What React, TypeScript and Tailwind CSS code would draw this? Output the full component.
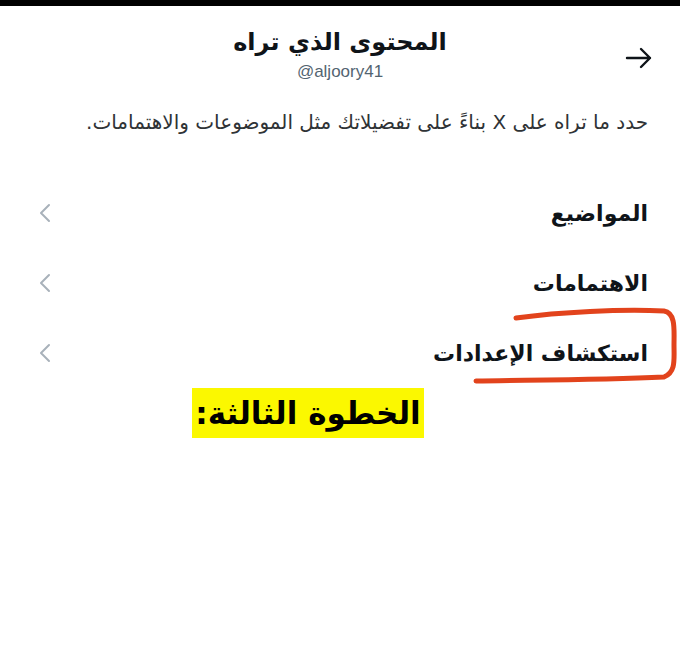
import React from "react";

const Chevron = () => (
  <svg width="14" height="20" viewBox="0 0 14 20" fill="none">
    <path d="M11 2 L3 10 L11 18" stroke="#a8b1ba" strokeWidth="2" strokeLinecap="round" strokeLinejoin="round" />
  </svg>
);

const Row = ({ label }: { label: string }) => (
  <div className="flex h-[70px] items-center justify-between pr-[32px] pl-[38px]" dir="ltr">
    <Chevron />
    <span className="text-[22px] font-bold text-[#0f1419]" dir="rtl">{label}</span>
  </div>
);

export default function App() {
  return (
    <div
      className="relative h-[659px] w-[680px] overflow-hidden bg-white"
      style={{ fontFamily: '"DejaVu Sans", "Noto Sans", sans-serif' }}
    >
      <div className="h-[6px] w-full bg-black" />
      <div className="relative flex flex-col items-center pt-[20px]">
        <div className="text-[24px] font-bold leading-[32px] text-[#0f1419]" dir="rtl">المحتوى الذي تراه</div>
        <div className="mt-[4px] text-[17px] leading-[20px] text-[#536471]" style={{ fontFamily: '"Liberation Sans", Arial, sans-serif' }}>@aljoory41</div>
        <div className="absolute right-[26px] top-[40px]">
          <svg width="30" height="24" viewBox="0 0 30 24" fill="none">
            <path d="M3 12 H26 M17 3 L26 12 L17 21" stroke="#0f1419" strokeWidth="2.4" strokeLinecap="round" strokeLinejoin="round" />
          </svg>
        </div>
      </div>
      <div className="mt-[26px] whitespace-nowrap pr-[32px] text-right text-[20px] leading-[28px] text-[#2f3336]" dir="rtl">
        حدد ما تراه على X بناءً على تفضيلاتك مثل الموضوعات والاهتمامات.
      </div>
      <div className="mt-[42px]">
        <Row label="المواضيع" />
        <Row label="الاهتمامات" />
        <Row label="استكشاف الإعدادات" />
      </div>
      <div className="flex pl-[192px]">
        <div className="flex h-[50px] w-[232px] items-center justify-center overflow-hidden whitespace-nowrap bg-[#fbf800]" dir="rtl">
          <span className="text-[31px] font-bold leading-[50px] text-black" style={{ fontFamily: '"DejaVu Sans", sans-serif' }}>الخطوة الثالثة:</span>
        </div>
      </div>
      <svg className="pointer-events-none absolute left-0 top-0" width="680" height="659" viewBox="0 0 680 659" fill="none">
        <path
          d="M516 318 C560 312 620 309 664 311 C676 313 674 330 674 345 C674 360 676 372 664 377 C600 380 530 380 476 381"
          stroke="#e2431c"
          strokeWidth="5"
          strokeLinecap="round"
          strokeLinejoin="round"
        />
      </svg>
    </div>
  );
}
